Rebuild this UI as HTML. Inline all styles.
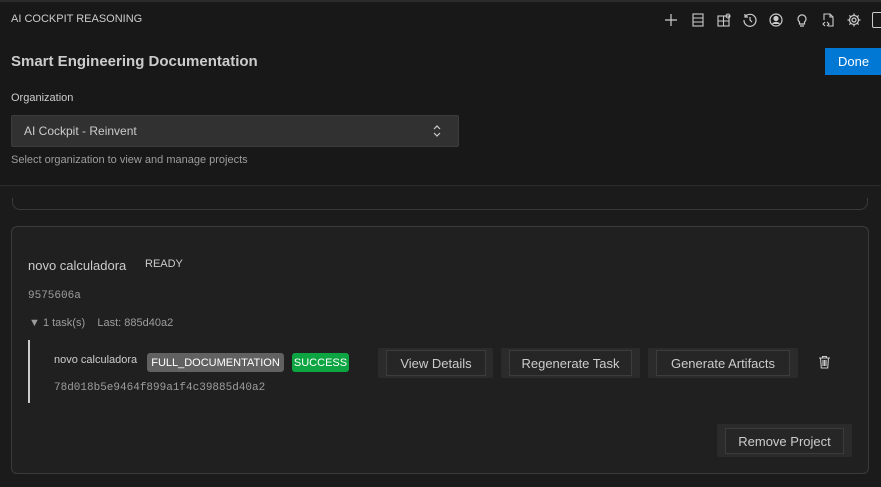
<!DOCTYPE html>
<html><head><style>
*{box-sizing:border-box;margin:0;padding:0}
body{width:881px;height:487px;overflow:hidden;background:#181818;font-family:"Liberation Sans",sans-serif;color:#ccc;position:relative}
.a{position:absolute}
.btnw{position:absolute;background:#2b2b2b;border-radius:2px}
.btn{position:absolute;border:1px solid #3c3c3c;background:#262626;color:#ccc;font-size:13px;display:flex;align-items:center;justify-content:center}
.ic{position:absolute;top:12px;width:16px;height:16px}
</style></head><body>
<div class="a" style="left:0;top:0;width:881px;height:2px;background:#2b2b2b"></div>
<div class="a" style="left:11px;top:13px;font-size:11px;color:#ccc">AI COCKPIT REASONING</div>
<svg class="ic" style="left:663px" viewBox="0 0 16 16" fill="none" stroke="#ccc" stroke-width="1.2"><path d="M8 2v12M2 8h12"/></svg>
<svg class="ic" style="left:690px" viewBox="0 0 16 16" fill="none" stroke="#ccc" stroke-width="1.1"><rect x="3" y="2" width="10" height="12"/><path d="M3 6h10M3 10h10"/></svg>
<svg class="ic" style="left:716px" viewBox="0 0 16 16" fill="none" stroke="#ccc" stroke-width="1.1"><rect x="2" y="4" width="11" height="10"/><path d="M7.5 4v10M2 9h11"/><circle cx="12" cy="4" r="2"/></svg>
<svg class="ic" style="left:742px" viewBox="0 0 16 16" fill="none" stroke="#ccc" stroke-width="1.2"><path d="M3 5a6 6 0 1 1-1 3M3 2v3h3M8 5v3l2 2"/></svg>
<svg class="ic" style="left:768px" viewBox="0 0 16 16" fill="none" stroke="#ccc" stroke-width="1.2"><circle cx="8" cy="8" r="6"/><circle cx="8" cy="6.5" r="2" fill="#ccc"/><path d="M4.5 12a4 3 0 0 1 7 0" fill="#ccc"/></svg>
<svg class="ic" style="left:794px" viewBox="0 0 16 16" fill="none" stroke="#ccc" stroke-width="1.2"><path d="M5.5 10a4 4 0 1 1 5 0v2h-5zM6 14h4"/></svg>
<svg class="ic" style="left:820px" viewBox="0 0 16 16" fill="none" stroke="#ccc" stroke-width="1.1"><path d="M4 8V2h6l3 3v9H8M10 2v3h3M5 10l-2 2 2 2M7 10l2 2-2 2"/></svg>
<svg class="ic" style="left:846px" viewBox="0 0 16 16" fill="none" stroke="#ccc" stroke-width="1.2"><circle cx="8" cy="8" r="2"/><path d="M8 1.5v2M8 12.5v2M1.5 8h2M12.5 8h2M3.4 3.4l1.4 1.4M11.2 11.2l1.4 1.4M3.4 12.6l1.4-1.4M11.2 4.8l1.4-1.4"/><circle cx="8" cy="8" r="4.5"/></svg>
<div class="a" style="left:872px;top:12px;width:12px;height:16px;border:1.2px solid #ccc;border-radius:2px"></div>
<div class="a" style="left:11px;top:53px;font-size:15px;font-weight:bold;color:#ccc">Smart Engineering Documentation</div>
<div class="a" style="left:825px;top:48px;width:60px;height:27px;background:#0078d4;color:#fff;font-size:13px;display:flex;align-items:center;padding-left:13px">Done</div>
<div class="a" style="left:11px;top:92px;font-size:11px;color:#ccc">Organization</div>
<div class="a" style="left:11px;top:115px;width:448px;height:32px;background:#313131;border:1px solid #3c3c3c;border-radius:2px;font-size:12px;color:#ccc;padding:8px 12px">AI Cockpit - Reinvent</div>
<svg class="a" style="left:432px;top:124px" width="10" height="14" viewBox="0 0 10 14" fill="none" stroke="#ccc" stroke-width="1.2"><path d="M2 5l3-3 3 3M2 9l3 3 3-3"/></svg>
<div class="a" style="left:11px;top:154px;font-size:11px;color:#9d9d9d">Select organization to view and manage projects</div>
<div class="a" style="left:0;top:185px;width:881px;height:302px;background:#1b1b1b;border-top:1px solid #2b2b2b"></div>
<div class="a" style="left:12px;top:198px;width:856px;height:12px;border:1px solid #3a3a3a;border-top:none;border-radius:0 0 8px 8px"></div>
<div class="a" style="left:11px;top:226px;width:858px;height:248px;background:#202020;border:1px solid #3a3a3a;border-radius:6px"></div>
<div class="a" style="left:28px;top:258px;font-size:13px;color:#ccc">novo calculadora</div>
<div class="a" style="left:145px;top:258px;font-size:11px;color:#ccc">READY</div>
<div class="a" style="left:28px;top:290px;font-size:11px;color:#9d9d9d;font-family:'Liberation Mono',monospace">9575606a</div>
<div class="a" style="left:29px;top:317px;font-size:11px;color:#9d9d9d">▼ 1 task(s) &nbsp;&nbsp;&nbsp;Last: 885d40a2</div>
<div class="a" style="left:28px;top:340px;width:2px;height:63px;background:#ccc"></div>
<div class="a" style="left:54px;top:354px;font-size:11px;color:#ccc">novo calculadora</div>
<div class="a" style="left:147px;top:353px;width:137px;height:19px;background:#616161;border-radius:3px;color:#fff;font-size:11px;display:flex;align-items:center;justify-content:center">FULL_DOCUMENTATION</div>
<div class="a" style="left:292px;top:353px;width:57px;height:19px;background:#0ca542;border-radius:3px;color:#fff;font-size:11px;display:flex;align-items:center;justify-content:center">SUCCESS</div>
<div class="a" style="left:54px;top:382px;font-size:11px;color:#9d9d9d;font-family:'Liberation Mono',monospace">78d018b5e9464f899a1f4c39885d40a2</div>
<div class="btnw" style="left:378px;top:348px;width:115px;height:30px"></div>
<div class="btn" style="left:386px;top:350px;width:100px;height:26px">View Details</div>
<div class="btnw" style="left:501px;top:348px;width:139px;height:30px"></div>
<div class="btn" style="left:509px;top:350px;width:123px;height:26px">Regenerate Task</div>
<div class="btnw" style="left:648px;top:348px;width:150px;height:30px"></div>
<div class="btn" style="left:656px;top:350px;width:134px;height:26px">Generate Artifacts</div>
<svg class="a" style="left:818px;top:355px" width="13" height="14" viewBox="0 0 13 14" fill="none" stroke="#ccc" stroke-width="1.1"><path d="M1 3h11M4.5 3V1.5h4V3M2.5 3l.8 10h6.4l.8-10M5 5v6M6.5 5v6M8 5v6"/></svg>
<div class="btnw" style="left:717px;top:424px;width:135px;height:33px"></div>
<div class="btn" style="left:725px;top:428px;width:119px;height:26px">Remove Project</div>
</body></html>
